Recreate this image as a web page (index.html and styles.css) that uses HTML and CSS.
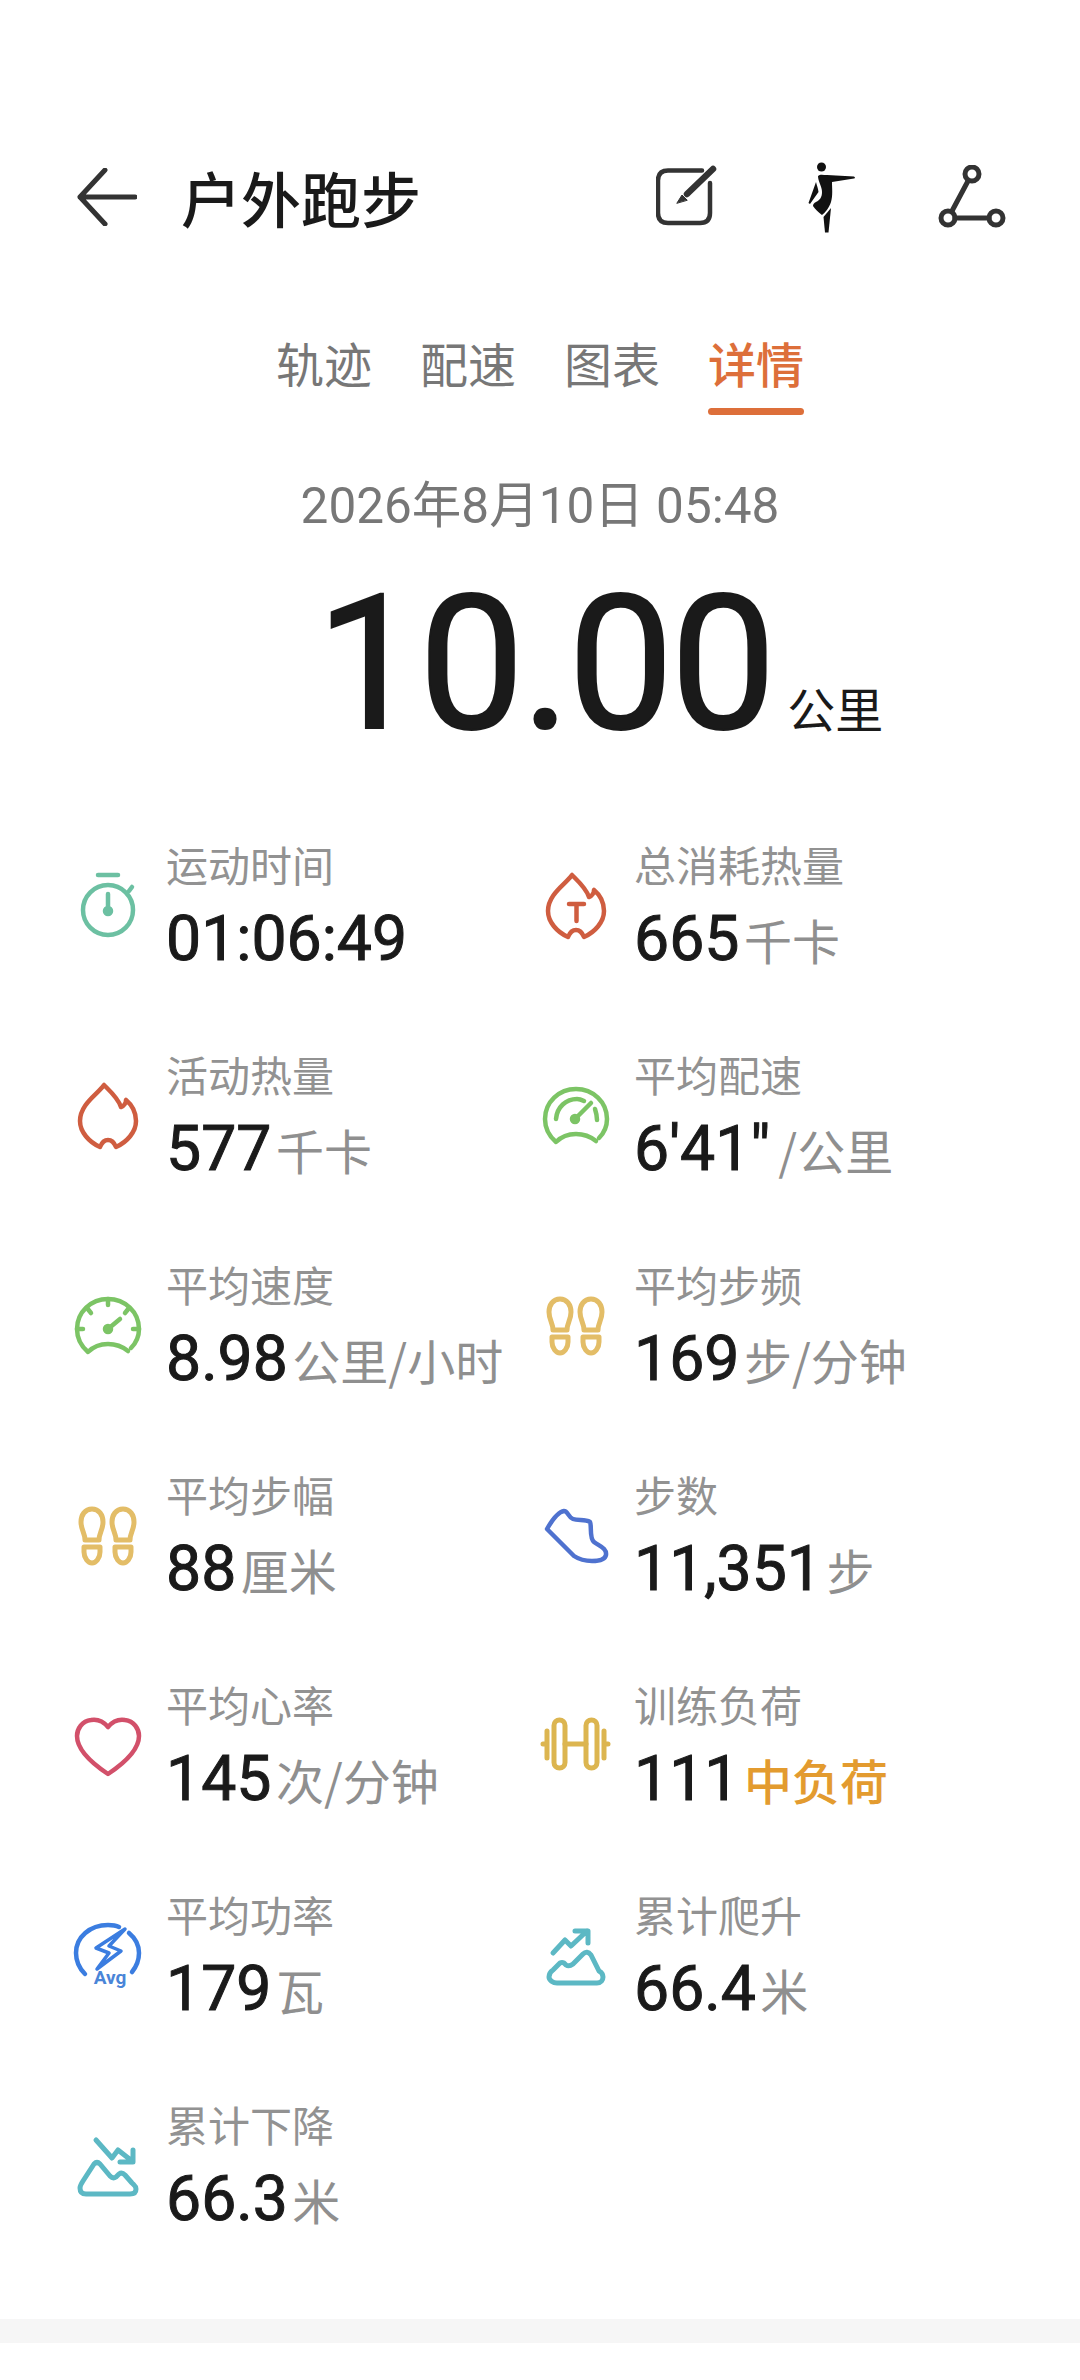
FILE: index.html
```html
<!DOCTYPE html>
<html lang="zh-CN">
<head>
  <meta charset="UTF-8" />
  <meta name="viewport" content="width=device-width, initial-scale=1.0" />
  <title>户外跑步</title>
  <link rel="stylesheet" href="styles.css">
</head>
<body>
  <header class="top-bar">
    <svg class="back-icon" width="60" height="58" viewBox="0 0 60 58">
      <path d="M28 2 L3 29 L28 56 M3 29 H58" />
    </svg>
    <h1>户外跑步</h1>
    <div class="top-actions">
      <svg class="note-icon" width="64" height="64" viewBox="0 0 64 64">
        <path d="M46 5.500 H12 Q2 5.500 2 15.500 V48 Q2 58 12 58 H44 Q54 58 54 48 V18" />
        <path class="pen" d="M31 29 L57 4" />
        <path class="pen-tip" d="M21 38 L26 30 L31 35 Z" />
      </svg>
      <svg class="runner-icon" width="50" height="72" viewBox="0 0 50 72">
        <circle cx="14.500" cy="6" r="4.500" />
        <path d="M11 15 C13 13 16 14 20 14 L47 15.500 Q49 17 47 17.500 L25 21 C25 28 26 34 24 41 C22 47 18 52 15 54 C11 51 8 48 6 45 C6 43 7 42 9 41 C13 39 15 36 15 31 C15 26 11 20 11 15 Z" />
        <path d="M9 21 C10 25 11 27 11.500 31 L3 43 L1.500 42 Z" />
        <path d="M24 47 L21.500 71.500 H18 L16.500 56 Z" />
      </svg>
      <svg class="share-icon" width="68" height="64" viewBox="0 0 68 64">
        <circle cx="34" cy="9" r="7" />
        <circle cx="10" cy="53" r="7" />
        <circle cx="58" cy="53" r="7" />
        <path d="M30 16 L14 46 M17 53 H51" />
      </svg>
    </div>
  </header>

  <nav class="tabs">
    <span class="tab">轨迹</span>
    <span class="tab">配速</span>
    <span class="tab">图表</span>
    <span class="tab active">详情</span>
  </nav>

  <div class="date">2026年8月10日 05:48</div>

  <div class="distance">
    <span class="distance-num">10.00</span>
    <span class="distance-unit">公里</span>
  </div>

  <section class="stats">
    <div class="stat">
      <svg class="stat-icon ic-teal" viewBox="0 0 72 72">
        <path d="M26 7 H46" />
        <circle cx="36" cy="42" r="25" />
        <path d="M57 23 L60 19 M36 26 V40" />
        <circle class="solid" cx="36" cy="43" r="3" />
      </svg>
      <div>
        <div class="stat-label">运动时间</div>
        <div class="stat-value">01:06:49</div>
      </div>
    </div>

    <div class="stat">
      <svg class="stat-icon ic-red" viewBox="0 0 72 72">
        <path d="M32 7 C26 16 8 26 8 43 C8 54 17 64 28 69 C30 64 33 62 36 62 C39 62 42 64 44 69 C55 64 64 54 64 43 C64 34 60 27 54 22 C54 25 52 28 49 29 C46 20 38 13 32 7 Z" />
        <path d="M29 36 H44 M36.500 36 V53" />
      </svg>
      <div>
        <div class="stat-label">总消耗热量</div>
        <div class="stat-value">665<span class="unit">千卡</span></div>
      </div>
    </div>

    <div class="stat">
      <svg class="stat-icon ic-red" viewBox="0 0 72 72">
        <path d="M32 7 C26 16 8 26 8 43 C8 54 17 64 28 69 C30 64 33 62 36 62 C39 62 42 64 44 69 C55 64 64 54 64 43 C64 34 60 27 54 22 C54 25 52 28 49 29 C46 20 38 13 32 7 Z" />
      </svg>
      <div>
        <div class="stat-label">活动热量</div>
        <div class="stat-value">577<span class="unit">千卡</span></div>
      </div>
    </div>

    <div class="stat">
      <svg class="stat-icon ic-green" viewBox="0 0 72 72">
        <path d="M59 60 C64 55 67 48 67 41 C67 24 53 11 36 11 C19 11 5 24 5 41 C5 50 9 58 16 64 C21 59 28 56 36 56 C44 56 51 59 56 63" />
        <path d="M16 41 C17 29 26 21 37 21 C40 21 42 22 44 23 M55 31 C56 34 57 38 57 42 M35 41 L51 25" />
        <circle class="solid" cx="35" cy="41" r="3" />
      </svg>
      <div>
        <div class="stat-label">平均配速</div>
        <div class="stat-value">6'41"<span class="unit unit-slash">/公里</span></div>
      </div>
    </div>

    <div class="stat">
      <svg class="stat-icon ic-green" viewBox="0 0 72 72">
        <path d="M59 60 C64 55 67 48 67 41 C67 24 53 11 36 11 C19 11 5 24 5 41 C5 50 9 58 16 64 C21 59 28 56 36 56 C44 56 51 59 56 63" />
        <path d="M36 11 V17 M15 20 L19 25 M57 20 L53 25 M5 41 H11 M67 41 H61 M36 41 L48 31" />
        <circle class="solid" cx="36" cy="41" r="3" />
      </svg>
      <div>
        <div class="stat-label">平均速度</div>
        <div class="stat-value">8.98<span class="unit">公里/小时</span></div>
      </div>
    </div>

    <div class="stat">
      <svg class="stat-icon ic-yellow" viewBox="0 0 72 72">
        <path d="M20 11 C27 11 31 17 31 24 C31 32 27 35 27 42 H13 C13 35 9 32 9 24 C9 17 13 11 20 11 Z M12 49 H28 V54 C28 60 24 65 20 65 C16 65 12 60 12 54 Z" />
        <path d="M51 11 C58 11 62 17 62 24 C62 32 58 35 58 42 H44 C44 35 40 32 40 24 C40 17 44 11 51 11 Z M43 49 H59 V54 C59 60 55 65 51 65 C47 65 43 60 43 54 Z" />
      </svg>
      <div>
        <div class="stat-label">平均步频</div>
        <div class="stat-value">169<span class="unit">步/分钟</span></div>
      </div>
    </div>

    <div class="stat">
      <svg class="stat-icon ic-yellow" viewBox="0 0 72 72">
        <path d="M20 11 C27 11 31 17 31 24 C31 32 27 35 27 42 H13 C13 35 9 32 9 24 C9 17 13 11 20 11 Z M12 49 H28 V54 C28 60 24 65 20 65 C16 65 12 60 12 54 Z" />
        <path d="M51 11 C58 11 62 17 62 24 C62 32 58 35 58 42 H44 C44 35 40 32 40 24 C40 17 44 11 51 11 Z M43 49 H59 V54 C59 60 55 65 51 65 C47 65 43 60 43 54 Z" />
      </svg>
      <div>
        <div class="stat-label">平均步幅</div>
        <div class="stat-value">88<span class="unit">厘米</span></div>
      </div>
    </div>

    <div class="stat">
      <svg class="stat-icon ic-blue" viewBox="0 0 72 72">
        <path d="M7 31 C11 24 17 14 24 13 C28 13 28 19 33 21 C38 23 45 21 50 24 C52 28 49 40 54 44 C59 48 67 50 66 57 C65 62 58 63 52 63 C46 63 40 62 34 58 Z" />
      </svg>
      <div>
        <div class="stat-label">步数</div>
        <div class="stat-value">11,351<span class="unit">步</span></div>
      </div>
    </div>

    <div class="stat">
      <svg class="stat-icon ic-pink" viewBox="0 0 72 72">
        <path d="M36 19 C31 13 25 11 19 12 C10 13 5 21 5 28 C5 43 24 58 36 66 C48 58 67 43 67 28 C67 21 62 13 53 12 C47 11 41 13 36 19 Z" />
      </svg>
      <div>
        <div class="stat-label">平均心率</div>
        <div class="stat-value">145<span class="unit">次/分钟</span></div>
      </div>
    </div>

    <div class="stat">
      <svg class="stat-icon ic-gold" viewBox="0 0 72 72">
        <rect x="14" y="12" width="11" height="48" rx="5.500" />
        <rect x="46" y="12" width="11" height="48" rx="5.500" />
        <path d="M25 36 H46 M7 23 V50 M64 23 V50 M3 36 H7 M64 36 H68" />
      </svg>
      <div>
        <div class="stat-label">训练负荷</div>
        <div class="stat-value">111<span class="unit unit-load">中负荷</span></div>
      </div>
    </div>

    <div class="stat">
      <svg class="stat-icon ic-avg" viewBox="0 0 72 72">
        <path d="M13 56 C7 50 4 43 4 35 C4 19 18 7 36 7 C40 7 44 7.500 47 9 M57 15 C63 20 67 27 67 35 C67 43 64 49 60 54" />
        <path class="bolt" d="M53 11 L24 30 L37 35 L25 51 L49 33 L37 28 Z" />
        <text class="avg-text" x="38" y="66" text-anchor="middle">Avg</text>
      </svg>
      <div>
        <div class="stat-label">平均功率</div>
        <div class="stat-value">179<span class="unit">瓦</span></div>
      </div>
    </div>

    <div class="stat">
      <svg class="stat-icon ic-cyan" viewBox="0 0 72 72">
        <path d="M13 35 L25 22 L31 28 L47 13 M35 13 H48 V25" />
        <path d="M17 65 H57 C61 65 63 62 63 59 C63 56 61 54 59 53 L51 37 Q47 32 43 36 L33 46 Q29 49 26 47 L24 45 Q22 44 20 45 L13 52 C10 54 9 56 9 59 C9 62 13 65 17 65 Z" />
      </svg>
      <div>
        <div class="stat-label">累计爬升</div>
        <div class="stat-value">66.4<span class="unit">米</span></div>
      </div>
    </div>

    <div class="stat">
      <svg class="stat-icon ic-cyan" viewBox="0 0 72 72">
        <path d="M24 12 L40 30 L46 22 L60 33 M48 34 H61 V22" />
        <path d="M14 66 H58 C62 66 64 64 64 61 C64 58 62 57 60 55 L53 47 Q50 44 47 46 L44 49 Q41 51 38 48 L28 36 Q25 33 22 36 L11 53 C9 56 8 58 8 60 C8 64 10 66 14 66 Z" />
      </svg>
      <div>
        <div class="stat-label">累计下降</div>
        <div class="stat-value">66.3<span class="unit">米</span></div>
      </div>
    </div>
  </section>

  <div class="band"></div>
</body>
</html>
```

FILE: styles.css
```css
* {
  box-sizing: border-box;
}
body {
  margin: 0;
  height: 2380px;
  overflow: hidden;
  background: #fff;
  color: #1a1a1a;
  font-family: Roboto, "Noto Sans CJK SC", sans-serif;
}

/* Top bar */
.top-bar {
  display: flex;
  align-items: center;
  height: 80px;
  margin-top: 157px;
  padding-left: 77px;
}
.top-bar h1 {
  margin: 0 0 0 44px;
  font-size: 60px;
  font-weight: 500;
  line-height: 78px;
  font-family: "Noto Sans CJK SC", sans-serif;
}
.top-bar svg {
  display: block;
  fill: none;
  stroke: #333;
  stroke-width: 5;
  stroke-linecap: round;
  stroke-linejoin: round;
}
.back-icon {
  stroke-width: 4.500;
}
.top-actions {
  display: flex;
  align-items: center;
  margin-left: auto;
  margin-right: 74px;
}
.top-bar .note-icon {
  stroke-width: 4.500;
}
.top-bar .note-icon .pen {
  stroke-width: 6.500;
}
.top-bar .note-icon .pen-tip {
  fill: #333;
  stroke-width: 1;
}
.top-bar .runner-icon {
  margin-left: 87px;
  margin-right: 81px;
  fill: #111;
  stroke: none;
}

/* Tabs */
.tabs {
  display: flex;
  justify-content: center;
  gap: 48px;
  margin-top: 89px;
  font-family: "Noto Sans CJK SC", sans-serif;
}
.tab {
  position: relative;
  font-size: 48px;
  line-height: 72px;
  color: #777;
}
.tab.active {
  color: #dd6f3a;
  font-weight: 500;
}
.tab.active::after {
  content: "";
  position: absolute;
  left: 0;
  right: 0;
  bottom: -17px;
  height: 7px;
  border-radius: 4px;
  background: #dd6f3a;
}

.date {
  margin-top: 76px;
  text-align: center;
  font-size: 49.500px;
  line-height: 64px;
  color: #777;
}

/* Big distance */
.distance {
  display: flex;
  align-items: baseline;
  padding-left: 316px;
  height: 190px;
  margin-top: 31px;
}
.distance-num {
  font-size: 188px;
  line-height: 190px;
  font-weight: 400;
  letter-spacing: -3px;
  -webkit-text-stroke: 2px #1a1a1a;
}
.distance-unit {
  margin-left: 14px;
  font-size: 48px;
  font-family: "Noto Sans CJK SC", sans-serif;
}

/* Stats grid */
.stats {
  display: grid;
  grid-template-columns: 468px 468px;
  grid-auto-rows: 210px;
  margin-top: 40px;
  padding-left: 72px;
}
.stat {
  display: flex;
  align-items: center;
  gap: 22px;
}
.stat-icon {
  flex: none;
  width: 72px;
  height: 72px;
  fill: none;
  stroke-width: 4.500;
  stroke-linecap: round;
  stroke-linejoin: round;
}
.stat-icon .solid {
  fill: currentColor;
}
.ic-teal { color: #6cc0a2; stroke: #6cc0a2; }
.ic-red { color: #cf5d40; stroke: #cf5d40; }
.ic-green { color: #7cc465; stroke: #7cc465; }
.ic-yellow { color: #e3bd67; stroke: #e3bd67; stroke-width: 5; }
.ic-blue { color: #4f72cf; stroke: #4f72cf; }
.ic-pink { color: #d2506a; stroke: #d2506a; }
.ic-gold { color: #dcb550; stroke: #dcb550; stroke-width: 5; }
.ic-avg { color: #3b7de0; stroke: #3b7de0; }
.ic-avg .bolt { stroke-width: 3.500; }
.ic-cyan { color: #5cb8c4; stroke: #5cb8c4; stroke-width: 5; }
.avg-text {
  fill: #4a85d8;
  stroke: none;
  font-size: 19px;
  font-weight: 700;
  font-family: Roboto, sans-serif;
}
.stat-label {
  font-size: 42px;
  line-height: 56px;
  color: #929292;
  font-family: "Noto Sans CJK SC", sans-serif;
  padding-top: 2px;
}
.stat-value {
  margin-top: 12px;
  font-size: 62.500px;
  font-weight: 400;
  line-height: 70px;
  white-space: nowrap;
  -webkit-text-stroke: 1px #1a1a1a;
}
.unit {
  margin-left: 4.500px;
  font-size: 48px;
  font-weight: 400;
  color: #8f8f8f;
  font-family: "Noto Sans CJK SC", sans-serif;
  -webkit-text-stroke: 0;
}
.unit-slash {
  margin-left: 8px;
}
.unit-load {
  color: #e39b2f;
  font-weight: 500;
}

.band {
  height: 24px;
  margin-top: 50px;
  background: #f6f6f6;
}
```
